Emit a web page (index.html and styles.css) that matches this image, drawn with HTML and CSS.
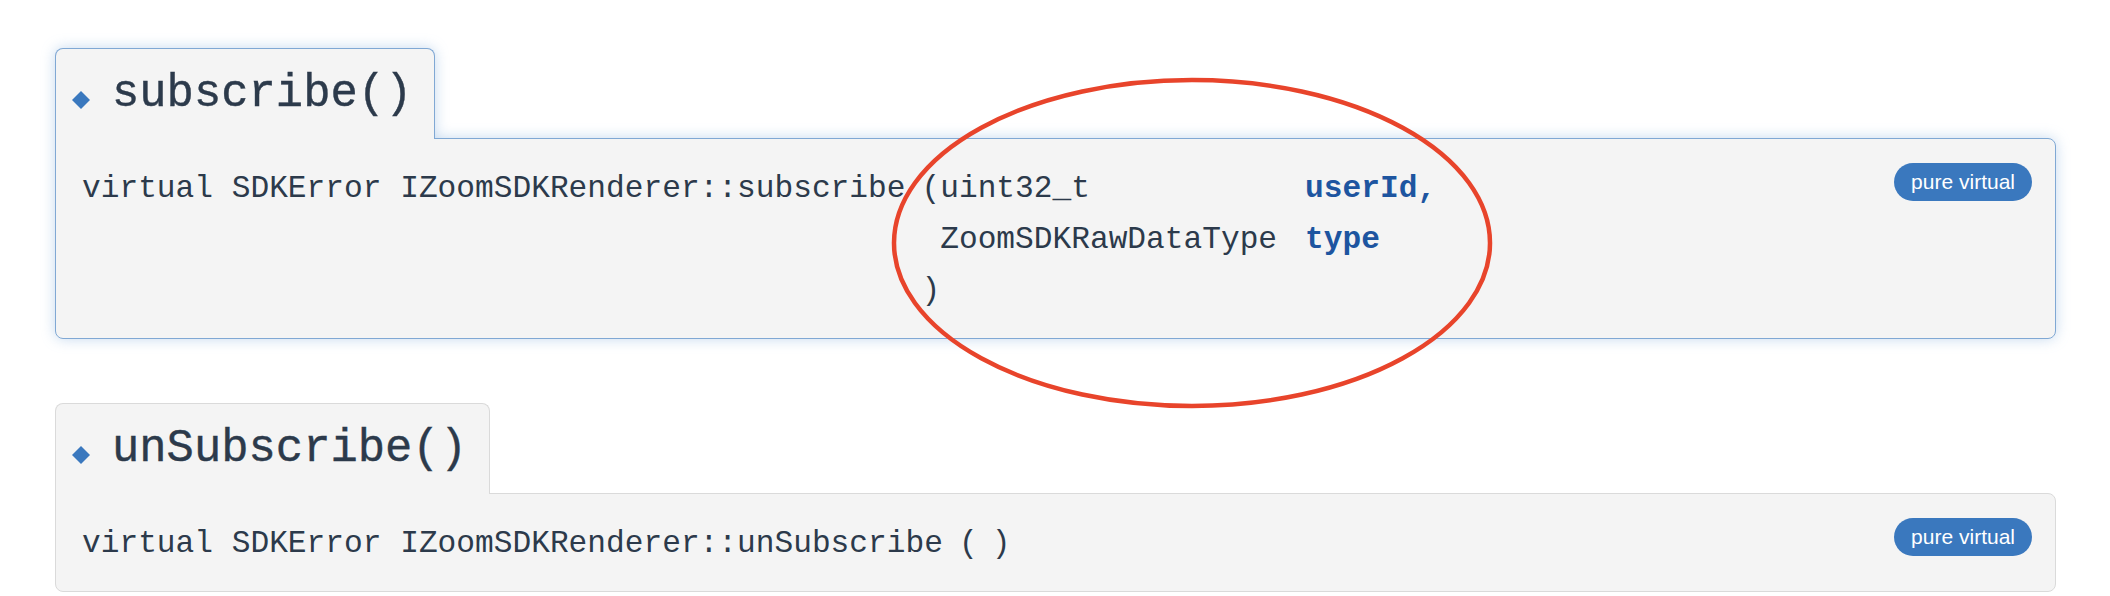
FILE: index.html
```html
<!DOCTYPE html>
<html>
<head>
<meta charset="utf-8">
<title>IZoomSDKRenderer</title>
<link rel="stylesheet" href="styles.css">
</head>
<body>
<div class="contents">

  <div class="memitem glow">
    <h2 class="memtitle"><span class="permalink"><svg width="18" height="18" viewBox="0 0 18 18"><path d="M9 0L18 9L9 18L0 9Z"/></svg></span>subscribe()</h2>
    <div class="memproto">
      <table class="memname">
        <tr>
          <td class="memname">virtual SDKError IZoomSDKRenderer::subscribe</td>
          <td>(</td>
          <td class="paramtype">uint32_t</td>
          <td class="paramname">userId,</td>
        </tr>
        <tr>
          <td></td>
          <td></td>
          <td class="paramtype">ZoomSDKRawDataType</td>
          <td class="paramname">type</td>
        </tr>
        <tr>
          <td></td>
          <td>)</td>
          <td></td>
          <td></td>
        </tr>
      </table>
      <span class="mlabel">pure virtual</span>
    </div>
  </div>

  <div class="memitem">
    <h2 class="memtitle"><span class="permalink"><svg width="18" height="18" viewBox="0 0 18 18"><path d="M9 0L18 9L9 18L0 9Z"/></svg></span>unSubscribe()</h2>
    <div class="memproto">
      <table class="memname">
        <tr>
          <td class="memname">virtual SDKError IZoomSDKRenderer::unSubscribe</td>
          <td>(</td>
          <td class="paramname"></td>
          <td class="close">)</td>
        </tr>
      </table>
      <span class="mlabel">pure virtual</span>
    </div>
  </div>

</div>

<svg class="mark" width="2110" height="596" viewBox="0 0 2110 596">
  <ellipse cx="1192" cy="243" rx="298" ry="163" fill="none" stroke="#e8442b" stroke-width="4.5"/>
</svg>
</body>
</html>
```

FILE: styles.css
```css
body {
	margin:0;
	background:#FFF;
	color:#2C3A4B;
	font-family:"Liberation Mono", monospace;
}
.contents {
	padding:48px 54px 0 55px;
}
.memitem {
	margin-bottom:64px;
}
.memitem:last-child {
	margin-bottom:0;
}
.memitem.glow {
	filter:drop-shadow(0 0 7px rgba(90, 145, 210, 0.35));
}
.memtitle {
	display:inline-block;
	position:relative;
	margin:0 0 -1px;
	padding:0 22px 0 16px;
	font-weight:400;
	font-size:45.5px;
	line-height:90px;
	background:#F4F4F4;
	border:1px solid #DADADA;
	border-bottom:0;
	border-radius:8px 8px 0 0;
	-webkit-text-stroke:0.4px #2C3A4B;
}
.permalink {
	display:inline-block;
	width:18px;
	margin-right:22px;
	vertical-align:-3px;
}
.permalink svg {
	display:block;
	fill:#3A78BE;
}
.memproto {
	display:flex;
	justify-content:space-between;
	align-items:flex-start;
	padding:24px 23px 22px 26px;
	background:#F4F4F4;
	border:1px solid #DADADA;
	border-radius:0 8px 8px 8px;
}
.glow .memtitle, .glow .memproto {
	border-color:#80A8D4;
}
table.memname {
	border-collapse:collapse;
	font-size:31.2px;
}
table.memname td {
	padding:0;
	line-height:51px;
	white-space:nowrap;
	vertical-align:top;
}
td.memname {
	padding-right:16px!important;
}
td.paramtype {
	padding-right:28px!important;
}
td.paramname {
	color:#1D55A0;
	font-weight:700;
}
td.close {
	padding-left:14px!important;
}
.mlabel {
	display:inline-block;
	height:38px;
	padding:0 17px;
	font:21px/38px "Liberation Sans", Arial, sans-serif;
	color:#FFF;
	background:#3A78BE;
	border-radius:19px;
}
.mark {
	position:absolute;
	top:0;
	left:0;
	pointer-events:none;
}
```
